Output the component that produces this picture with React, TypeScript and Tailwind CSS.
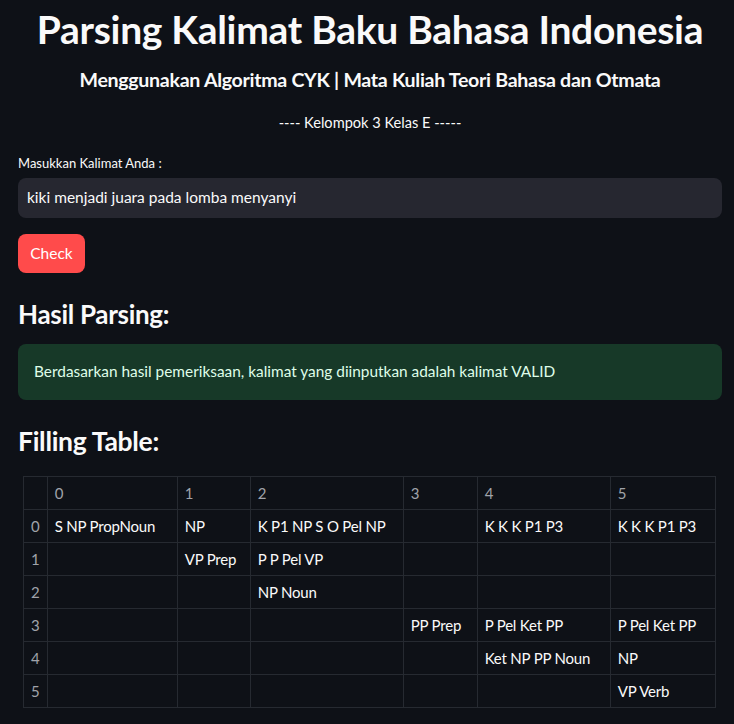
import React from "react";

const header = ["0", "1", "2", "3", "4", "5"];

const rows: string[][] = [
  ["S NP PropNoun", "NP", "K P1 NP S O Pel NP", "", "K K K P1 P3", "K K K P1 P3"],
  ["", "VP Prep", "P P Pel VP", "", "", ""],
  ["", "", "NP Noun", "", "", ""],
  ["", "", "", "PP Prep", "P Pel Ket PP", "P Pel Ket PP"],
  ["", "", "", "", "Ket NP PP Noun", "NP"],
  ["", "", "", "", "", "VP Verb"],
];

const colWidths = ["w-[23px]", "w-[130px]", "w-[73px]", "w-[153px]", "w-[74px]", "w-[133px]", "w-[105px]"];

export default function App() {
  return (
    <div
      className="min-h-screen bg-[#0e1117] text-[#fafafa] pl-[18px] pr-[12px] pb-4"
      style={{ fontFamily: "Lato, 'Noto Sans', sans-serif" }}
    >
      <h1 className="pt-[4px] whitespace-nowrap text-center text-[39px] font-bold leading-[50px] tracking-[-0.3px]">
        Parsing Kalimat Baku Bahasa Indonesia
      </h1>
      <h4 className="mt-[14px] text-center text-[19.6px] font-bold leading-[24px] tracking-[-0.3px]">
        Menggunakan Algoritma CYK | Mata Kuliah Teori Bahasa dan Otmata
      </h4>
      <p className="mt-[21px] text-center text-[14.6px] leading-[20px]">---- Kelompok 3 Kelas E -----</p>

      <label className="mt-[21px] block text-[13px] leading-[18px]">Masukkan Kalimat Anda :</label>
      <div className="mt-[6px] flex h-[40px] items-center rounded-[8px] bg-[#262730] px-[9px] text-[15.5px]">
        kiki menjadi juara pada lomba menyanyi
      </div>
      <button className="mt-[16px] flex h-[39px] w-[67px] items-center justify-center rounded-[8px] bg-[#ff4b4b] text-[15.5px] text-white">
        Check
      </button>

      <h3 className="mt-[24px] text-[26px] font-bold leading-[34px] tracking-[-0.3px]">Hasil Parsing:</h3>
      <div className="mt-[13px] flex h-[56px] items-center rounded-[8px] bg-[#173928] px-[16px] text-[15.4px] text-[#dffde9]">
        Berdasarkan hasil pemeriksaan, kalimat yang diinputkan adalah kalimat VALID
      </div>

      <h3 className="mt-[24px] text-[26.5px] font-bold leading-[34px] tracking-[-0.3px]">Filling Table:</h3>

      <table className="mt-[18px] ml-[5px] table-fixed border-collapse text-[15px]">
        <colgroup>
          {colWidths.map((w, i) => (
            <col key={i} className={w} />
          ))}
        </colgroup>
        <thead>
          <tr className="h-[33px]">
            <th className="border border-[#262a31] p-0" />
            {header.map((h) => (
              <th key={h} className="border border-[#262a31] px-[7px] text-left font-normal text-[#a0a3aa]">
                {h}
              </th>
            ))}
          </tr>
        </thead>
        <tbody>
          {rows.map((r, i) => (
            <tr key={i} className="h-[33px]">
              <td className="border border-[#262a31] px-[7px] text-[#a0a3aa]">{i}</td>
              {r.map((c, j) => (
                <td key={j} className="whitespace-nowrap border border-[#262a31] px-[7px] tracking-[-0.2px]">
                  {c}
                </td>
              ))}
            </tr>
          ))}
        </tbody>
      </table>
    </div>
  );
}
